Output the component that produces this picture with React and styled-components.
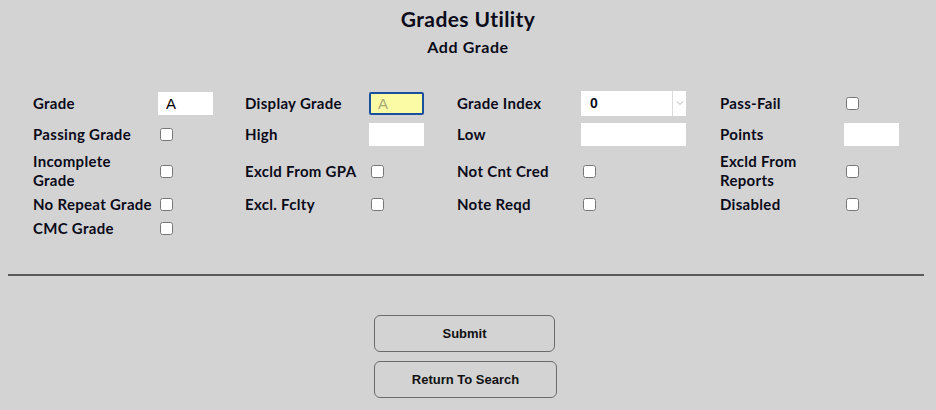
import styled, { createGlobalStyle } from "styled-components";

const GlobalStyle = createGlobalStyle`
  html, body {
    margin: 0;
    background: #d3d3d3;
  }
  body {
    padding: 8px;
    font-family: "Lato", "Open Sans", sans-serif;
    color: #0b0b1a;
  }
`;

const fields = [
  [
    { label: "Grade", type: "text", value: "A" },
    { label: "Display Grade", type: "text", value: "A", focus: true },
    { label: "Grade Index", type: "select", value: "0" },
    { label: "Pass-Fail", type: "check" },
  ],
  [
    { label: "Passing Grade", type: "check" },
    { label: "High", type: "text" },
    { label: "Low", type: "text", wide: true },
    { label: "Points", type: "text" },
  ],
  [
    { label: "Incomplete Grade", type: "check" },
    { label: "Excld From GPA", type: "check" },
    { label: "Not Cnt Cred", type: "check" },
    { label: "Excld From Reports", type: "check" },
  ],
  [
    { label: "No Repeat Grade", type: "check" },
    { label: "Excl. Fclty", type: "check" },
    { label: "Note Reqd", type: "check" },
    { label: "Disabled", type: "check" },
  ],
  [{ label: "CMC Grade", type: "check" }],
];

function Field({ field }) {
  if (field.type === "check") {
    return (
      <Cell>
        <Check type="checkbox" />
      </Cell>
    );
  }
  if (field.type === "select") {
    return (
      <Cell>
        <SelectBox>
          <span>{field.value}</span>
          <Arrow>
            <svg width="8" height="6" viewBox="0 0 8 6">
              <path d="M1 1.5 L4 4.5 L7 1.5" fill="none" stroke="#b0b0b0" strokeWidth="1" />
            </svg>
          </Arrow>
        </SelectBox>
      </Cell>
    );
  }
  return (
    <Cell>
      <TextInput
        $focus={field.focus}
        $wide={field.wide}
        defaultValue={field.value || ""}
      />
    </Cell>
  );
}

function App() {
  return (
    <Page>
      <GlobalStyle />
      <Title>Grades Utility</Title>
      <SubTitle>Add Grade</SubTitle>
      <FormGrid>
        {fields.map((row) =>
          row.map((field) => (
            <Pair key={field.label}>
              <Label>{field.label}</Label>
              <Field field={field} />
            </Pair>
          ))
        )}
      </FormGrid>
      <Divider />
      <Actions>
        <Button $width="181px">Submit</Button>
        <Button $width="183px" $shift>
          Return To Search
        </Button>
      </Actions>
    </Page>
  );
}

export default App;

const Page = styled.div`
  display: flex;
  flex-direction: column;
`;

const Title = styled.h1`
  margin: -1px 0 0;
  text-align: center;
  font-size: 21px;
  font-weight: 700;
  letter-spacing: 0.4px;
  line-height: 24px;
`;

const SubTitle = styled.h2`
  margin: 6px 0 0;
  text-align: center;
  font-size: 16px;
  font-weight: 700;
  letter-spacing: 0.6px;
  line-height: 20px;
`;

const FormGrid = styled.div`
  display: grid;
  grid-template-columns: 125px 87px 124px 88px 124px 139px 124px 1fr;
  row-gap: 5px;
  margin: 33px 0 0 25px;
  align-items: center;
`;

const Pair = styled.div`
  display: contents;
`;

const Label = styled.div`
  font-size: 15px;
  font-weight: 700;
  letter-spacing: 0.3px;
  line-height: 19px;
  padding-right: 4px;
`;

const Cell = styled.div`
  display: flex;
  align-items: center;
`;

const Check = styled.input`
  width: 13px;
  height: 13px;
  margin: 0 0 0 2px;
`;

const TextInput = styled.input`
  box-sizing: border-box;
  width: ${(p) => (p.$wide ? "105px" : "55px")};
  height: 23px;
  margin: 1.5px 0;
  padding: 0 0 0 7px;
  border: ${(p) => (p.$focus ? "2px solid #1a4fa0" : "1px solid #fff")};
  border-radius: ${(p) => (p.$focus ? "2px" : "0")};
  background: ${(p) => (p.$focus ? "#fbfba5" : "#fff")};
  color: ${(p) => (p.$focus ? "#a7a77a" : "#000")};
  font-family: "Liberation Sans", Arial, sans-serif;
  font-size: 15px;
  outline: none;
`;

const SelectBox = styled.div`
  box-sizing: border-box;
  display: flex;
  align-items: center;
  justify-content: space-between;
  width: 105px;
  height: 25px;
  background: #fff;
  font-family: "Liberation Sans", Arial, sans-serif;
  font-size: 14px;
  font-weight: 700;
  padding-left: 9px;
`;

const Arrow = styled.div`
  display: flex;
  align-items: center;
  justify-content: center;
  width: 13px;
  height: 100%;
  border-left: 1px solid #dcdcdc;
`;

const Divider = styled.hr`
  box-sizing: border-box;
  width: calc(100% - 4px);
  margin: 36px 0 0;
  border: none;
  border-top: 2px solid #5a5a5a;
`;

const Actions = styled.div`
  display: flex;
  flex-direction: column;
  align-items: center;
  gap: 9px;
  margin-top: 39px;
  padding-right: 7px;
`;

const Button = styled.button`
  box-sizing: border-box;
  width: ${(p) => p.$width};
  height: 37px;
  margin-left: ${(p) => (p.$shift ? "2px" : "0")};
  background: transparent;
  border: 1px solid #6b6b6b;
  border-radius: 6px;
  font-family: "Liberation Sans", Arial, sans-serif;
  font-size: 13px;
  font-weight: 700;
  color: #111;
`;
